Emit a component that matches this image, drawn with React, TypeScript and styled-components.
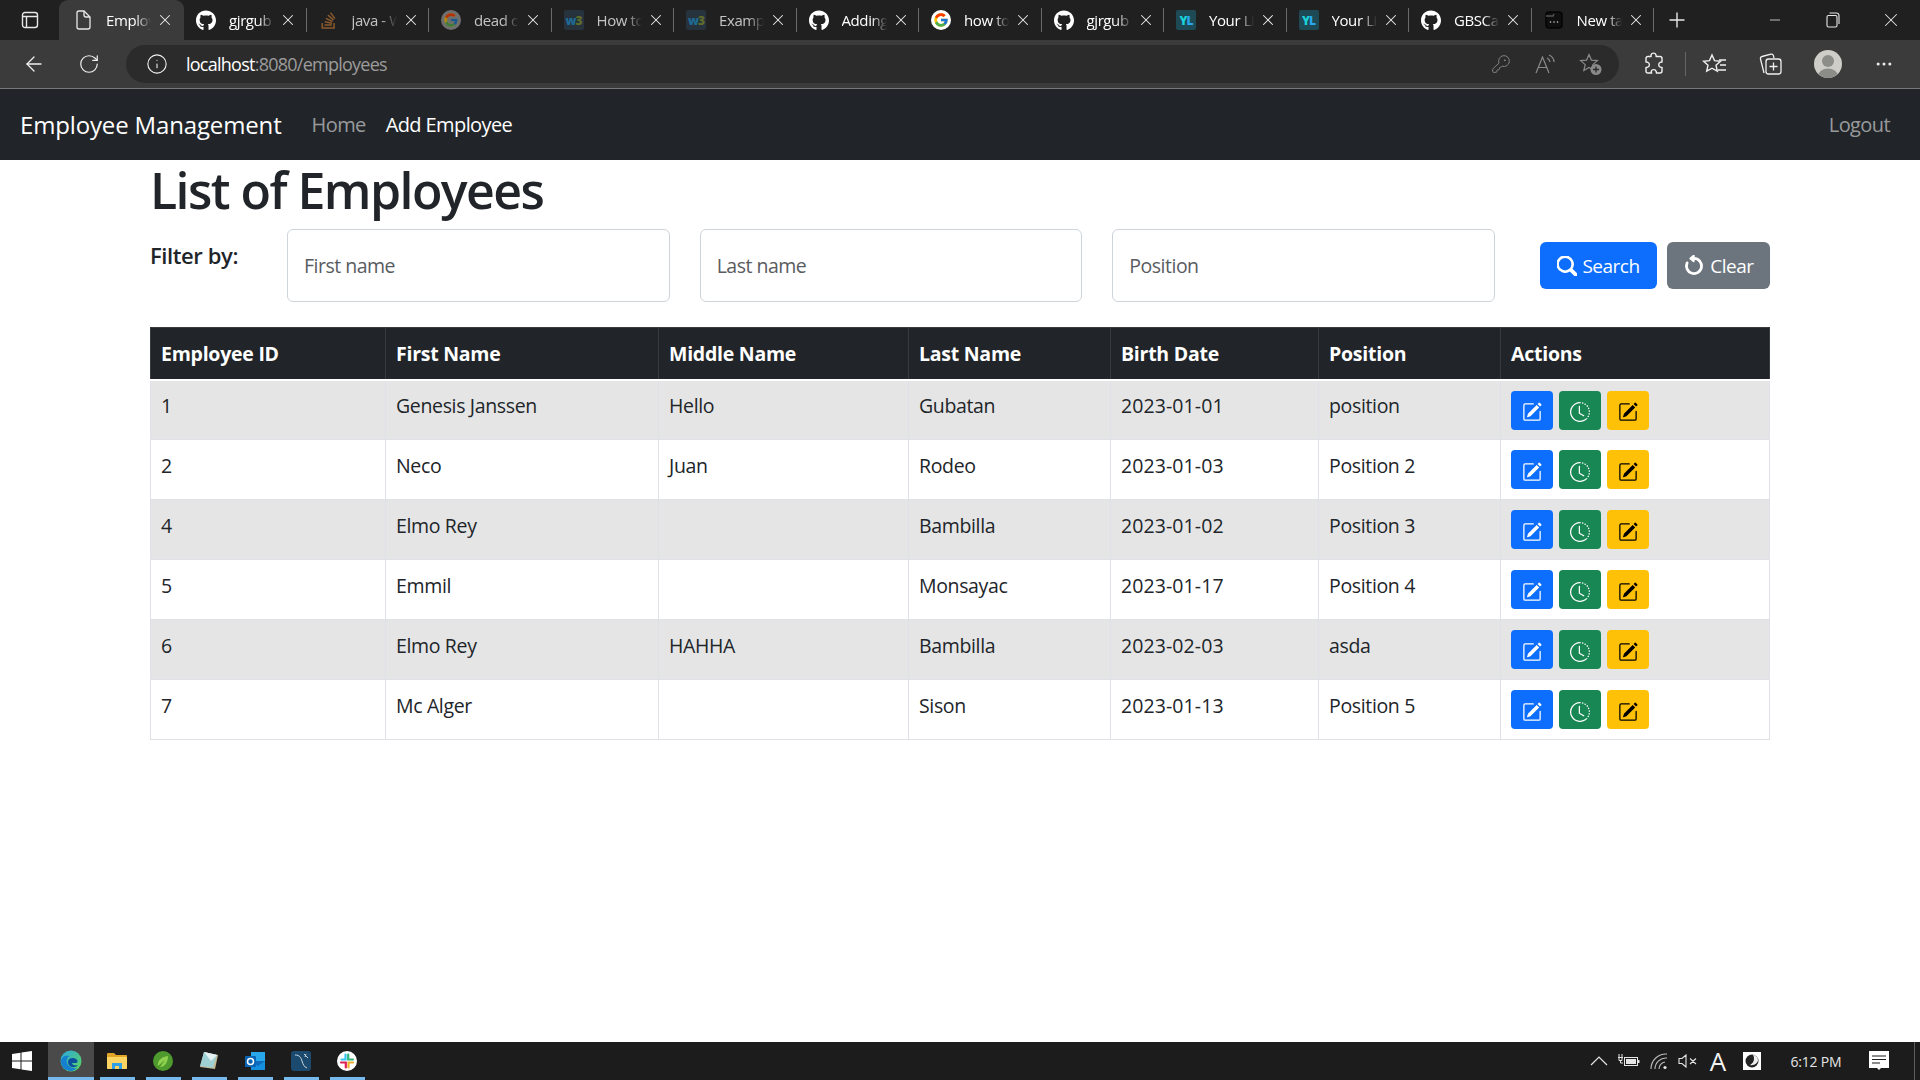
import React from 'react';
import styled, { createGlobalStyle } from 'styled-components';
import {
  ArrowLeft,
  Ellipsis,
  Info,
  KeyRound,
  Minus,
  Plus,
  RotateCw,
  X,
} from 'lucide-react';
import { BsArrowCounterclockwise, BsClockHistory, BsPencilSquare, BsSearch } from 'react-icons/bs';
import { FaGithub, FaStackOverflow } from 'react-icons/fa';
import { FcGoogle } from 'react-icons/fc';

const UI_FONT = `'Open Sans', 'Noto Sans', sans-serif`;

const GlobalStyle = createGlobalStyle`
  html, body { margin: 0; padding: 0; background: #fff; }
  body { font-family: ${UI_FONT}; color: #212529; }
  * { box-sizing: border-box; }
`;

const Page = styled.div`
  display: flex;
  flex-direction: column;
  height: 1080px;
  overflow: hidden;
`;

/* browser chrome */
const TabStrip = styled.div`
  display: flex;
  align-items: stretch;
  height: 40px;
  background: #202020;
  flex: none;
`;
const SideButton = styled.div`
  width: 59px;
  display: flex;
  align-items: center;
  justify-content: center;
  color: #e8e8e8;
`;
const Tab = styled.div<{ $active?: boolean; $sep?: boolean }>`
  position: relative;
  width: ${(p) => (p.$active ? '125px' : '122.5px')};
  display: flex;
  align-items: center;
  padding-left: ${(p) => (p.$active ? '14px' : '12px')};
  font-size: 15px;
  letter-spacing: -0.4px;
  background: ${(p) => (p.$active ? '#3b3b3b' : 'transparent')};
  border-radius: ${(p) => (p.$active ? '9px 9px 0 0' : '0')};
  &::after {
    content: '';
    display: ${(p) => (p.$sep ? 'block' : 'none')};
    position: absolute;
    right: 0;
    top: 8px;
    bottom: 8px;
    width: 1px;
    background: #6b6b6b;
  }
`;
const TabIcon = styled.div`
  width: 20px;
  height: 20px;
  flex: none;
  display: flex;
  align-items: center;
  justify-content: center;
  color: #fff;
`;
const TabTitle = styled.div<{ $dim?: boolean }>`
  width: 47px;
  margin-left: 13px;
  overflow: hidden;
  white-space: nowrap;
  color: ${(p) => (p.$dim ? '#c4c4c4' : '#ffffff')};
  -webkit-mask-image: linear-gradient(to right, #000 62%, transparent 96%);
  mask-image: linear-gradient(to right, #000 62%, transparent 96%);
`;
const TabClose = styled.div`
  width: 18px;
  margin-left: 3px;
  display: flex;
  justify-content: center;
  color: #ececec;
`;
const NewTab = styled.div`
  width: 45px;
  display: flex;
  align-items: center;
  justify-content: center;
  color: #e8e8e8;
`;
const WindowControls = styled.div`
  margin-left: auto;
  display: flex;
`;
const WindowButton = styled.div`
  width: 58px;
  display: flex;
  align-items: center;
  justify-content: center;
  color: #e8e8e8;
`;
const SiteBadge = styled.div<{ $bg: string; $fg: string; $accent?: string }>`
  width: 20px;
  height: 20px;
  border-radius: 2px;
  display: flex;
  align-items: center;
  justify-content: center;
  font-size: 12px;
  font-weight: 800;
  letter-spacing: -1px;
  background: ${(p) => p.$bg};
  color: ${(p) => p.$fg};
  span { color: ${(p) => p.$accent ?? p.$fg}; }
`;
const GoogleDisc = styled.div<{ $dim?: boolean }>`
  width: 20px;
  height: 20px;
  border-radius: 50%;
  background: ${(p) => (p.$dim ? '#9a9a9a' : '#fff')};
  display: flex;
  align-items: center;
  justify-content: center;
  opacity: ${(p) => (p.$dim ? 0.65 : 1)};
`;

const Toolbar = styled.div`
  height: 49px;
  flex: none;
  display: flex;
  align-items: center;
  padding: 0 14px 0 12px;
  background: #3b3b3b;
  border-bottom: 1px solid #777;
`;
const ToolSlot = styled.div<{ $ml?: number }>`
  width: 44px;
  height: 38px;
  flex: none;
  margin-left: ${(p) => p.$ml ?? 0}px;
  display: flex;
  align-items: center;
  justify-content: center;
  color: #f0f0f0;
`;
const ToolSeparator = styled.div`
  width: 1px;
  height: 24px;
  flex: none;
  margin: 0 7px 0 9px;
  background: #666;
`;
const AddressBar = styled.div`
  flex: 1;
  height: 38px;
  margin-left: 15px;
  margin-right: 13px;
  padding: 0 16px 0 20px;
  display: flex;
  align-items: center;
  border-radius: 19px;
  background: #2b2b2b;
  color: #f0f0f0;
`;
const Url = styled.div`
  margin-left: 18px;
  font-size: 18px;
  letter-spacing: -0.75px;
  color: #fff;
  span { color: #9c9c9c; }
`;
const AddressActions = styled.div`
  margin-left: auto;
  display: flex;
  align-items: center;
  gap: 23px;
  color: #8a8a8a;
`;
const Avatar = styled.div`
  width: 28px;
  height: 28px;
  border-radius: 50%;
  overflow: hidden;
`;

/* app navbar */
const Navbar = styled.nav`
  height: 71px;
  flex: none;
  display: flex;
  align-items: center;
  padding: 0 30px 0 20px;
  background: #212529;
`;
const Brand = styled.a`
  font-size: 24px;
  letter-spacing: -0.15px;
  color: #fff;
  margin-right: 30px;
`;
const NavLink = styled.a<{ $active?: boolean }>`
  font-size: 20px;
  letter-spacing: -0.6px;
  margin-right: 20px;
  color: ${(p) => (p.$active ? '#ffffff' : 'rgba(255, 255, 255, 0.55)')};
`;
const LogoutLink = styled(NavLink)`
  margin: 0 0 0 auto;
`;

/* page content */
const Main = styled.main`
  flex: 1;
  padding: 0 150px;
`;
const Title = styled.h1`
  margin: 0;
  height: 69px;
  font-size: 50px;
  font-weight: 600;
  line-height: 60px;
  letter-spacing: -1.55px;
`;
const FilterRow = styled.div`
  display: flex;
  align-items: flex-start;
`;
const FilterLabel = styled.label`
  width: 137px;
  flex: none;
  margin-top: 11px;
  font-size: 22px;
  line-height: 30px;
  font-weight: 600;
  letter-spacing: -0.4px;
`;
const FilterInputs = styled.div`
  flex: 1;
  display: flex;
  gap: 30px;
`;
const FilterInput = styled.input`
  flex: 1;
  min-width: 0;
  height: 73px;
  padding: 0 16px;
  border: 1px solid #ced4da;
  border-radius: 6px;
  font-family: ${UI_FONT};
  font-size: 19.5px;
  letter-spacing: -0.5px;
  &::placeholder { color: #595c5f; opacity: 1; }
`;
const FilterButtons = styled.div`
  height: 73px;
  margin-left: 45px;
  flex: none;
  display: flex;
  align-items: center;
  gap: 10px;
`;
const Button = styled.button<{ $bg: string; $w: number }>`
  width: ${(p) => p.$w}px;
  height: 47px;
  padding: 0;
  border: 0;
  border-radius: 6px;
  display: flex;
  align-items: center;
  justify-content: center;
  gap: 5px;
  font-family: ${UI_FONT};
  font-size: 19px;
  letter-spacing: -0.5px;
  color: #fff;
  background: ${(p) => p.$bg};
`;

const EmployeeTable = styled.table`
  width: 1619px;
  margin-top: 25px;
  border-collapse: collapse;
  table-layout: fixed;
  font-size: 19.5px;
  letter-spacing: -0.35px;
`;
const HeadCell = styled.th`
  height: 52px;
  padding: 0 10px;
  text-align: left;
  font-size: 19.5px;
  font-weight: 700;
  letter-spacing: -0.25px;
  color: #fff;
  background: #212529;
  border: 1px solid #373b3e;
  border-bottom: 2px solid #fff;
`;
const Row = styled.tr<{ $striped: boolean }>`
  background: ${(p) => (p.$striped ? '#e5e5e5' : '#ffffff')};
`;
const Cell = styled.td`
  height: 60px;
  padding: 10.5px 10px 0;
  vertical-align: top;
  line-height: 30px;
  border: 1px solid #dee2e6;
  color: #212529;
`;
const DateCell = styled(Cell)`
  letter-spacing: 0.1px;
`;
const ActionCell = styled(Cell)`
  padding: 10px 10px 0;
`;
const Actions = styled.div`
  display: flex;
  gap: 6px;
`;
const ActionButton = styled.button<{ $bg: string; $fg: string }>`
  width: 42px;
  height: 39px;
  padding: 4px 0 0;
  border: 0;
  border-radius: 4px;
  display: flex;
  align-items: center;
  justify-content: center;
  color: ${(p) => p.$fg};
  background: ${(p) => p.$bg};
`;

/* windows taskbar */
const Taskbar = styled.footer`
  height: 38px;
  flex: none;
  display: flex;
  align-items: stretch;
  background: #1c1c1c;
  color: #e6e6e6;
`;
const StartButton = styled.div`
  width: 48px;
  display: flex;
  align-items: center;
  justify-content: center;
  padding-right: 4px;
`;
const TaskItem = styled.div<{ $active?: boolean }>`
  position: relative;
  width: 46px;
  display: flex;
  align-items: center;
  justify-content: center;
  background: ${(p) => (p.$active ? '#4a4a4a' : 'transparent')};
  &::after {
    content: '';
    position: absolute;
    left: ${(p) => (p.$active ? '0' : '6px')};
    right: ${(p) => (p.$active ? '0' : '5px')};
    bottom: 0;
    height: 3px;
    background: #76b9ed;
  }
`;
const Tray = styled.div`
  margin-left: auto;
  display: flex;
  align-items: center;
  padding-right: 5px;
`;
const TraySlot = styled.div<{ $w: number }>`
  width: ${(p) => p.$w}px;
  display: flex;
  align-items: center;
  justify-content: center;
`;
const Clock = styled.div`
  width: 78px;
  margin-left: 7px;
  text-align: center;
  font-size: 14px;
  letter-spacing: -0.2px;
`;
const TrayLetter = styled.div`
  font-size: 26px;
  line-height: 1;
  color: #f2f2f2;
`;
const ShowDesktop = styled.div`
  width: 1px;
  height: 100%;
  margin-left: 11px;
  background: #5c5c5c;
`;

const LayoutIcon = () => (
  <svg width="18" height="18" viewBox="0 0 18 18" fill="none" stroke="#e8e8e8" strokeWidth="1.4">
    <rect x="1.5" y="1.5" width="15" height="15" rx="2.5" />
    <path d="M1.5 5.5h15M5.5 5.5v11" />
  </svg>
);
const DocIcon = () => (
  <svg width="18" height="20" viewBox="0 0 18 20" fill="none" stroke="#e8e8e8" strokeWidth="1.3">
    <path d="M5 1h5l6 6v10a2 2 0 0 1-2 2H5a2 2 0 0 1-2-2V3a2 2 0 0 1 2-2z" />
    <path d="M10 1v4a2 2 0 0 0 2 2h4" />
  </svg>
);
const NewTabIcon = () => (
  <svg width="20" height="20" viewBox="0 0 20 20" fill="#0f0f0f" stroke="#050505" strokeWidth="1.5">
    <rect x="2" y="2" width="16" height="16" rx="3" />
    <path d="M2 6h7l1-2" fill="none" stroke="#555" />
    <circle cx="6.5" cy="12" r=".8" fill="#ccc" stroke="none" />
    <circle cx="10" cy="12" r=".8" fill="#ccc" stroke="none" />
    <circle cx="13.5" cy="12" r=".8" fill="#ccc" stroke="none" />
  </svg>
);
const RestoreIcon = () => (
  <svg width="14" height="16" viewBox="0 0 14 16" fill="none" stroke="#e8e8e8" strokeWidth="1.1">
    <rect x="1" y="3.5" width="10" height="11.5" rx="1.5" />
    <path d="M3.5 1h7a2.5 2.5 0 0 1 2.5 2.5V12" />
  </svg>
);
const ReadAloudIcon = () => (
  <svg width="22" height="20" viewBox="0 0 22 20" fill="none" stroke="#8a8a8a" strokeWidth="1.2">
    <path d="M2 19 8.5 3 15 19M4.5 13.5h8" />
    <path d="M13 4a5 5 0 0 1 3 4M15 1a8 8 0 0 1 5 7" />
  </svg>
);
const FavAddIcon = () => (
  <svg width="24" height="24" viewBox="0 0 24 24" fill="none" stroke="#8a8a8a" strokeWidth="1.2">
    <path d="M10 2.5l2.4 5.6 6 .5-4.6 4 1.4 5.9L10 15.5l-5.2 3 1.4-5.9-4.6-4 6-.5z" />
    <circle cx="17" cy="17.5" r="5.5" fill="#8a8a8a" stroke="none" />
    <path d="M17 14.5v6M14 17.5h6" stroke="#2b2b2b" strokeWidth="1.3" />
  </svg>
);
const ExtensionIcon = () => (
  <svg width="22" height="24" viewBox="0 0 22 24" fill="none" stroke="#f0f0f0" strokeWidth="1.4">
    <path d="M8 3a2.6 2.6 0 0 1 5 0l.2 1.5H17a2 2 0 0 1 2 2V10l-1.4.2a2.6 2.6 0 0 0 0 5l1.4.3V19a2 2 0 0 1-2 2h-3.5l-.3-1.5a2.6 2.6 0 0 0-5 0L8.500 21H5a2 2 0 0 1-2-2v-3.500l1.500-.3a2.600 2.600 0 0 0 0-5L3 10V6.500a2 2 0 0 1 2-2h3z" />
  </svg>
);
const FavoritesIcon = () => (
  <svg width="26" height="24" viewBox="0 0 26 24" fill="none" stroke="#f0f0f0" strokeWidth="1.4">
    <path d="M10 3l2.500 5.600 6 .6-4.500 4 1.300 6L10 16.200l-5.300 3 1.300-6-4.500-4 6-.6z" />
    <path d="M17 8h7M18 13h6M16 18h8" />
  </svg>
);
const CollectionsIcon = () => (
  <svg width="26" height="26" viewBox="0 0 26 26" fill="none" stroke="#f0f0f0" strokeWidth="1.3">
    <path d="M7 22 3.500 8a2 2 0 0 1 1.500-2.500L14 3.200a2 2 0 0 1 2.400 1.400L17 7" />
    <rect x="9" y="8" width="15" height="15" rx="2.500" />
    <path d="M16.500 11.500v8M12.500 15.500h8" />
  </svg>
);
const ProfileIcon = () => (
  <svg width="28" height="28" viewBox="0 0 28 28">
    <rect width="28" height="28" fill="#cfcdc8" />
    <circle cx="14" cy="11" r="6" fill="#8c8c88" />
    <ellipse cx="14" cy="26" rx="10" ry="7.500" fill="#8c8c88" />
  </svg>
);

const WindowsLogo = () => (
  <svg width="20" height="20" viewBox="0 0 20 20" fill="#fff">
    <path d="M0 3l8.500-1.200V9.500H0zM9.500 1.600 20 0v9.500H9.500zM0 10.500h8.500v7.700L0 17zM9.500 10.500H20V20L9.500 18.400z" />
  </svg>
);
const EdgeLogo = () => (
  <svg width="22" height="22" viewBox="0 0 22 22">
    <defs>
      <linearGradient id="edgeTop" x1="0" y1="0" x2="1" y2="1">
        <stop offset="0" stopColor="#2aa9e0" />
        <stop offset="1" stopColor="#5fd65a" />
      </linearGradient>
    </defs>
    <circle cx="11" cy="11" r="10.500" fill="url(#edgeTop)" />
    <path d="M1 12C1 6 6 5 10 6c-3 1-4 4-3 7s5 6 10 5c-2 2-4 3-6 3C6 21 1 17 1 12z" fill="#1580cf" />
    <path d="M8 11c1-3 5-4 8-2 2 1 2 4 0 4h-4c0 2 3 3 6 2-2 3-7 3-9 0-1-1-1-3-1-4z" fill="#0c4f9c" />
  </svg>
);
const FolderLogo = () => (
  <svg width="20" height="18" viewBox="0 0 20 18">
    <path d="M0 2a1 1 0 0 1 1-1h6l2 2h10a1 1 0 0 1 1 1v12a1 1 0 0 1-1 1H1a1 1 0 0 1-1-1z" fill="#e0a526" />
    <path d="M0 5h20v11a1 1 0 0 1-1 1H1a1 1 0 0 1-1-1z" fill="#fcd462" />
    <path d="M5 17v-6h10v6h-3v-3H8v3z" fill="#2f9fe8" />
  </svg>
);
const SpringLogo = () => (
  <svg width="20" height="20" viewBox="0 0 20 20">
    <circle cx="10" cy="10" r="10" fill="#4e9a2e" />
    <path d="M5 15c-1-5 3-9 10-10 0 6-3 11-8 11l5-7-7 6z" fill="#8fd14f" />
  </svg>
);
const NotesLogo = () => (
  <svg width="20" height="20" viewBox="0 0 20 20">
    <path d="M5 1l14 3-3 14L1 16z" fill="#c9b98f" />
    <path d="M5 1l13 3-4 13L1 15z" fill="#9fd0d4" />
    <path d="M5 1l13 3-6 6z" fill="#e6f2f2" />
  </svg>
);
const OutlookLogo = () => (
  <svg width="20" height="20" viewBox="0 0 20 20">
    <rect x="6" y="1" width="14" height="9" fill="#28a8ea" />
    <rect x="6" y="10" width="14" height="9" fill="#0f6cbd" />
    <path d="M6 10l7 5 7-5v9H6z" fill="#1490df" />
    <rect x="0" y="5" width="11" height="11" rx="1" fill="#0a64b4" />
    <circle cx="5.500" cy="10.500" r="3" fill="none" stroke="#fff" strokeWidth="1.500" />
  </svg>
);
const WorkbenchLogo = () => (
  <svg width="20" height="20" viewBox="0 0 20 20" fill="none">
    <rect width="20" height="20" rx="3" fill="#1c4a6e" />
    <path d="M4 4c5 0 6 3 7 6s2 6 5 7" stroke="#c8d4dc" strokeWidth="1" />
    <path d="M13 3l4 4M15 3l-1 3" stroke="#c8d4dc" strokeWidth="1" />
  </svg>
);
const SlackLogo = () => (
  <svg width="20" height="20" viewBox="0 0 20 20">
    <circle cx="10" cy="10" r="10" fill="#fff" />
    <path d="M8.500 3.500v5h-4" stroke="#36c5f0" strokeWidth="2.200" fill="none" strokeLinecap="round" />
    <path d="M16 8.500h-4.800v-5" stroke="#2eb67d" strokeWidth="2.200" fill="none" strokeLinecap="round" />
    <path d="M11.500 16.500v-5h4.500" stroke="#ecb22e" strokeWidth="2.200" fill="none" strokeLinecap="round" />
    <path d="M4 11.500h4.800v5" stroke="#e01e5a" strokeWidth="2.200" fill="none" strokeLinecap="round" />
  </svg>
);
const TrayChevron = () => (
  <svg width="18" height="10" viewBox="0 0 18 10" fill="none" stroke="#e6e6e6" strokeWidth="1.200">
    <path d="M1 9l8-8 8 8" />
  </svg>
);
const TrayBattery = () => (
  <svg width="22" height="14" viewBox="0 0 22 14" fill="none" stroke="#e6e6e6">
    <path d="M1 0v3M4 0v3M0 3.500h5M1 4v2.500h3V4M2.500 6.500V9H5" />
    <rect x="6.500" y="3.500" width="13" height="8" />
    <rect x="8" y="5" width="10" height="5" fill="#e6e6e6" stroke="none" />
    <rect x="20" y="6" width="1.500" height="3" fill="#e6e6e6" stroke="none" />
  </svg>
);
const TrayWifi = () => (
  <svg width="18" height="18" viewBox="0 0 18 18" fill="none" stroke="#bdbdbd" strokeWidth="1.100">
    <path d="M1 17A15 15 0 0 1 17 2M5 17A11 11 0 0 1 17 6M9 17a7 7 0 0 1 6-7" />
    <circle cx="15" cy="15.500" r="1.600" fill="#e6e6e6" stroke="none" />
  </svg>
);
const TraySpeaker = () => (
  <svg width="20" height="14" viewBox="0 0 20 14" fill="none" stroke="#e6e6e6" strokeWidth="1.100">
    <path d="M1 4.500h3L8 1v12L4 9.500H1zM12 4.500l6 5.500M18 4.500 12 10" />
  </svg>
);
const TrayMoon = () => (
  <svg width="18" height="18" viewBox="0 0 18 18">
    <rect width="18" height="18" fill="#fff" />
    <circle cx="9" cy="9" r="6.500" fill="#222" />
    <path d="M10 3c2 3 1 8-3 10 4 1 8-2 8-5 0-3-3-5-5-5z" fill="#eee" />
  </svg>
);
const TrayNotes = () => (
  <svg width="20" height="20" viewBox="0 0 20 20">
    <path d="M0 0h20v17h-8l-2 2-2-2H0z" fill="#fff" />
    <path d="M3 5h14M3 8.500h14M3 12h8" stroke="#1c1c1c" strokeWidth="1.100" />
  </svg>
);

const GitHubMark = () => <FaGithub size={21} color="#fff" />;
const GoogleMark = ({ dim }: { dim?: boolean }) => (
  <GoogleDisc $dim={dim}>
    <FcGoogle size={16} />
  </GoogleDisc>
);
const W3Mark = () => (
  <SiteBadge $bg="#26323c" $fg="#1f6a94" $accent="#5f6b2c">
    w<span>3</span>
  </SiteBadge>
);
const YlMark = () => (
  <SiteBadge $bg="#1e4a56" $fg="#19d3d8" $accent="#2aa7ee">
    Y<span>L</span>
  </SiteBadge>
);

type TabData = { title: string; icon: React.ReactNode; dim?: boolean; sep?: boolean };

const tabs: TabData[] = [
  { title: 'Employees', icon: <DocIcon /> },
  { title: 'gjrgub', icon: <GitHubMark />, sep: true },
  { title: 'java - What', icon: <FaStackOverflow size={19} color="#8a5a2e" />, dim: true, sep: true },
  { title: 'dead code', icon: <GoogleMark dim />, dim: true, sep: true },
  { title: 'How to use', icon: <W3Mark />, dim: true, sep: true },
  { title: 'Example', icon: <W3Mark />, dim: true, sep: true },
  { title: 'Adding', icon: <GitHubMark />, sep: true },
  { title: 'how to', icon: <GoogleMark />, sep: true },
  { title: 'gjrgub', icon: <GitHubMark />, sep: true },
  { title: 'Your List', icon: <YlMark />, sep: true },
  { title: 'Your List', icon: <YlMark />, sep: true },
  { title: 'GBSCapstone', icon: <GitHubMark />, sep: true },
  { title: 'New tab', icon: <NewTabIcon />, sep: true },
];

const columns = [
  { title: 'Employee ID', width: 235 },
  { title: 'First Name', width: 273 },
  { title: 'Middle Name', width: 250 },
  { title: 'Last Name', width: 202 },
  { title: 'Birth Date', width: 208 },
  { title: 'Position', width: 182 },
  { title: 'Actions', width: 269 },
];

const employees = [
  { id: 1, first: 'Genesis Janssen', middle: 'Hello', last: 'Gubatan', birth: '2023-01-01', position: 'position' },
  { id: 2, first: 'Neco', middle: 'Juan', last: 'Rodeo', birth: '2023-01-03', position: 'Position 2' },
  { id: 4, first: 'Elmo Rey', middle: '', last: 'Bambilla', birth: '2023-01-02', position: 'Position 3' },
  { id: 5, first: 'Emmil', middle: '', last: 'Monsayac', birth: '2023-01-17', position: 'Position 4' },
  { id: 6, first: 'Elmo Rey', middle: 'HAHHA', last: 'Bambilla', birth: '2023-02-03', position: 'asda' },
  { id: 7, first: 'Mc Alger', middle: '', last: 'Sison', birth: '2023-01-13', position: 'Position 5' },
];

const taskItems = [
  { key: 'edge', icon: <EdgeLogo />, active: true },
  { key: 'files', icon: <FolderLogo /> },
  { key: 'spring', icon: <SpringLogo /> },
  { key: 'notes', icon: <NotesLogo /> },
  { key: 'outlook', icon: <OutlookLogo /> },
  { key: 'workbench', icon: <WorkbenchLogo /> },
  { key: 'slack', icon: <SlackLogo /> },
];

export default function App() {
  return (
    <Page>
      <GlobalStyle />
      <TabStrip>
        <SideButton>
          <LayoutIcon />
        </SideButton>
        {tabs.map((tab, i) => (
          <Tab key={i} $active={i === 0} $sep={tab.sep}>
            <TabIcon>{tab.icon}</TabIcon>
            <TabTitle $dim={tab.dim}>{tab.title}</TabTitle>
            <TabClose>
              <X size={18} strokeWidth={1.4} />
            </TabClose>
          </Tab>
        ))}
        <NewTab>
          <Plus size={24} strokeWidth={1.4} />
        </NewTab>
        <WindowControls>
          <WindowButton>
            <Minus size={16} strokeWidth={1.2} />
          </WindowButton>
          <WindowButton>
            <RestoreIcon />
          </WindowButton>
          <WindowButton>
            <X size={22} strokeWidth={1.1} />
          </WindowButton>
        </WindowControls>
      </TabStrip>

      <Toolbar>
        <ToolSlot>
          <ArrowLeft size={24} strokeWidth={1.3} />
        </ToolSlot>
        <ToolSlot $ml={11}>
          <RotateCw size={22} strokeWidth={1.3} />
        </ToolSlot>
        <AddressBar>
          <Info size={22} strokeWidth={1.2} />
          <Url>
            localhost<span>:8080/employees</span>
          </Url>
          <AddressActions>
            <KeyRound size={20} strokeWidth={1.1} />
            <ReadAloudIcon />
            <FavAddIcon />
          </AddressActions>
        </AddressBar>
        <ToolSlot>
          <ExtensionIcon />
        </ToolSlot>
        <ToolSeparator />
        <ToolSlot>
          <FavoritesIcon />
        </ToolSlot>
        <ToolSlot $ml={11}>
          <CollectionsIcon />
        </ToolSlot>
        <ToolSlot $ml={14}>
          <Avatar>
            <ProfileIcon />
          </Avatar>
        </ToolSlot>
        <ToolSlot $ml={12}>
          <Ellipsis size={20} strokeWidth={1.6} />
        </ToolSlot>
      </Toolbar>

      <Navbar>
        <Brand>Employee Management</Brand>
        <NavLink>Home</NavLink>
        <NavLink $active>Add Employee</NavLink>
        <LogoutLink>Logout</LogoutLink>
      </Navbar>

      <Main>
        <Title>List of Employees</Title>
        <FilterRow>
          <FilterLabel>Filter by:</FilterLabel>
          <FilterInputs>
            <FilterInput placeholder="First name" />
            <FilterInput placeholder="Last name" />
            <FilterInput placeholder="Position" />
          </FilterInputs>
          <FilterButtons>
            <Button $bg="#0d6efd" $w={117}>
              <BsSearch size={20} stroke="currentColor" strokeWidth={1} />
              Search
            </Button>
            <Button $bg="#6c757d" $w={103}>
              <BsArrowCounterclockwise size={22} stroke="currentColor" strokeWidth={1} />
              Clear
            </Button>
          </FilterButtons>
        </FilterRow>

        <EmployeeTable>
          <colgroup>
            {columns.map((c) => (
              <col key={c.title} width={c.width} />
            ))}
          </colgroup>
          <thead>
            <tr>
              {columns.map((c) => (
                <HeadCell key={c.title}>{c.title}</HeadCell>
              ))}
            </tr>
          </thead>
          <tbody>
            {employees.map((e, i) => (
              <Row key={e.id} $striped={i % 2 === 0}>
                <Cell>{e.id}</Cell>
                <Cell>{e.first}</Cell>
                <Cell>{e.middle}</Cell>
                <Cell>{e.last}</Cell>
                <DateCell>{e.birth}</DateCell>
                <Cell>{e.position}</Cell>
                <ActionCell>
                  <Actions>
                    <ActionButton $bg="#0d6efd" $fg="#fff">
                      <BsPencilSquare size={20} />
                    </ActionButton>
                    <ActionButton $bg="#198754" $fg="#fff">
                      <BsClockHistory size={20} />
                    </ActionButton>
                    <ActionButton $bg="#ffc107" $fg="#000">
                      <BsPencilSquare size={20} />
                    </ActionButton>
                  </Actions>
                </ActionCell>
              </Row>
            ))}
          </tbody>
        </EmployeeTable>
      </Main>

      <Taskbar>
        <StartButton>
          <WindowsLogo />
        </StartButton>
        {taskItems.map((item) => (
          <TaskItem key={item.key} $active={item.active}>
            {item.icon}
          </TaskItem>
        ))}
        <Tray>
          <TraySlot $w={30}>
            <TrayChevron />
          </TraySlot>
          <TraySlot $w={30}>
            <TrayBattery />
          </TraySlot>
          <TraySlot $w={30}>
            <TrayWifi />
          </TraySlot>
          <TraySlot $w={28}>
            <TraySpeaker />
          </TraySlot>
          <TraySlot $w={32}>
            <TrayLetter>A</TrayLetter>
          </TraySlot>
          <TraySlot $w={36}>
            <TrayMoon />
          </TraySlot>
          <Clock>6:12 PM</Clock>
          <TraySlot $w={48}>
            <TrayNotes />
          </TraySlot>
          <ShowDesktop />
        </Tray>
      </Taskbar>
    </Page>
  );
}
